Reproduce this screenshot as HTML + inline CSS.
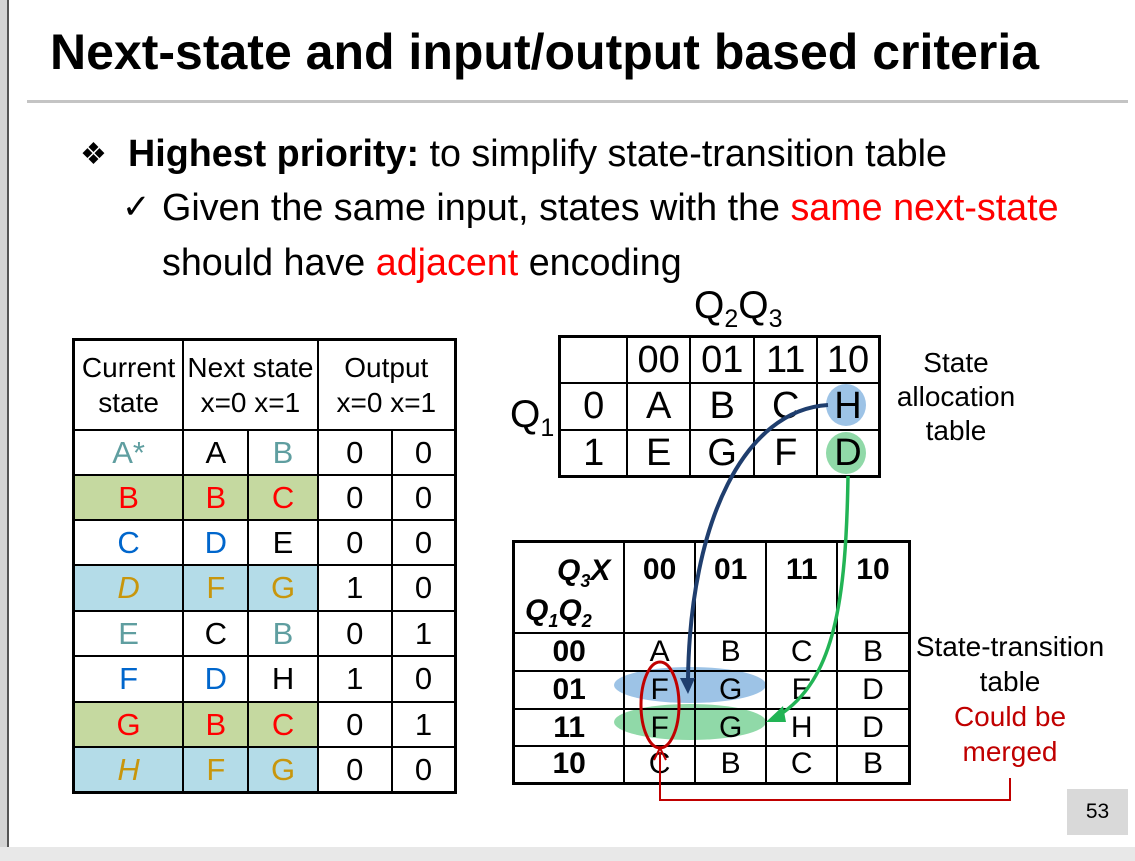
<!DOCTYPE html>
<html><head><meta charset="utf-8"><style>
*{margin:0;padding:0;box-sizing:border-box}
body{width:1135px;height:861px;overflow:hidden;background:#fff;font-family:"Liberation Sans",sans-serif;position:relative;color:#000}
.a{position:absolute;white-space:nowrap}
table{border-collapse:collapse;position:absolute}
td{border:2px solid #000;text-align:center;padding:0;line-height:1}
</style></head><body>
<div class="a" style="left:0;top:0;width:9px;height:861px;background:#d4d4d4;border-right:2px solid #555"></div>
<div class="a" style="left:0;top:847px;width:1135px;height:14px;background:#e8e8e8"></div>
<div class="a" style="left:50px;top:23px;font-size:50px;font-weight:bold">Next-state and input/output based criteria</div>
<div class="a" style="left:27px;top:100px;width:1101px;height:3px;background:#c4c4c4"></div>
<div class="a" style="left:80px;top:137px;font-size:30px">❖</div>
<div class="a" style="left:128px;top:132px;font-size:37.7px"><b>Highest priority:</b> to simplify state-transition table</div>
<div class="a" style="left:122px;top:187px;font-size:34px">✓</div>
<div class="a" style="left:162px;top:186px;font-size:37.7px">Given the same input, states with the <span style="color:#f00">same next-state</span></div>
<div class="a" style="left:162px;top:241px;font-size:37.7px">should have <span style="color:#f00">adjacent</span> encoding</div>

<table style="left:72px;top:338px;width:385px;border:3px solid #000;font-size:31px">
<colgroup><col style="width:110px"><col style="width:66px"><col style="width:70px"><col style="width:75px"><col style="width:64px"></colgroup>
<tr style="height:90px;font-size:28px"><td style="line-height:1.25">Current<br>state</td><td colspan="2" style="line-height:1.25">Next state<br>x=0 x=1</td><td colspan="2" style="line-height:1.25">Output<br>x=0 x=1</td></tr>
<tr style="height:45px"><td style="color:#5f9ea0">A*</td><td>A</td><td style="color:#5f9ea0">B</td><td>0</td><td>0</td></tr>
<tr style="height:45px"><td style="background:#c5d9a0;color:#f00">B</td><td style="background:#c5d9a0;color:#f00">B</td><td style="background:#c5d9a0;color:#f00">C</td><td>0</td><td>0</td></tr>
<tr style="height:45px"><td style="color:#0066cc">C</td><td style="color:#0066cc">D</td><td>E</td><td>0</td><td>0</td></tr>
<tr style="height:46px"><td style="background:#b4dce8;color:#c8960c;font-style:italic">D</td><td style="background:#b4dce8;color:#c8960c">F</td><td style="background:#b4dce8;color:#c8960c">G</td><td>1</td><td>0</td></tr>
<tr style="height:45px"><td style="color:#5f9ea0">E</td><td>C</td><td style="color:#5f9ea0">B</td><td>0</td><td>1</td></tr>
<tr style="height:46px"><td style="color:#0066cc">F</td><td style="color:#0066cc">D</td><td>H</td><td>1</td><td>0</td></tr>
<tr style="height:45px"><td style="background:#c5d9a0;color:#f00">G</td><td style="background:#c5d9a0;color:#f00">B</td><td style="background:#c5d9a0;color:#f00">C</td><td>0</td><td>1</td></tr>
<tr style="height:46px"><td style="background:#b4dce8;color:#c8960c;font-style:italic">H</td><td style="background:#b4dce8;color:#c8960c">F</td><td style="background:#b4dce8;color:#c8960c">G</td><td>0</td><td>0</td></tr>
</table>

<svg class="a" style="left:0;top:0" width="1135" height="861">
<ellipse cx="846" cy="405" rx="20" ry="21" fill="#9dc3e6"/>
<ellipse cx="846" cy="453" rx="20" ry="21" fill="#90d9a8"/>
<ellipse cx="690" cy="685" rx="76" ry="18" fill="#9dc3e6"/>
<ellipse cx="690" cy="722" rx="76" ry="18" fill="#90d9a8"/>
</svg>

<div class="a" style="left:694px;top:284px;font-size:39px">Q<sub style="font-size:25px">2</sub>Q<sub style="font-size:25px">3</sub></div>
<div class="a" style="left:510px;top:393px;font-size:39px">Q<sub style="font-size:25px">1</sub></div>
<table style="left:558px;top:335px;width:323px;border:3px solid #000;font-size:38px">
<colgroup><col style="width:69px"><col style="width:63px"><col style="width:65px"><col style="width:63px"><col style="width:63px"></colgroup>
<tr style="height:46px"><td></td><td>00</td><td>01</td><td>11</td><td>10</td></tr>
<tr style="height:47px"><td>0</td><td>A</td><td>B</td><td>C</td><td>H</td></tr>
<tr style="height:47px"><td>1</td><td>E</td><td>G</td><td>F</td><td>D</td></tr>
</table>

<table style="left:512px;top:540px;width:399px;border:3px solid #000;font-size:30px">
<colgroup><col style="width:111px"><col style="width:71px"><col style="width:72px"><col style="width:71px"><col style="width:73px"></colgroup>
<tr style="height:88px"><td style="font-weight:bold;font-style:italic;text-align:left;vertical-align:top;padding:10px 0 0 10px;line-height:1.2"><span style="padding-left:32px">Q<sub style="font-size:18px">3</sub>X</span><br>Q<sub style="font-size:18px">1</sub>Q<sub style="font-size:18px">2</sub></td><td style="font-weight:bold;vertical-align:top;padding-top:12px">00</td><td style="font-weight:bold;vertical-align:top;padding-top:12px">01</td><td style="font-weight:bold;vertical-align:top;padding-top:12px">11</td><td style="font-weight:bold;vertical-align:top;padding-top:12px">10</td></tr>
<tr style="height:38px"><td style="font-weight:bold">00</td><td>A</td><td>B</td><td>C</td><td>B</td></tr>
<tr style="height:38px"><td style="font-weight:bold">01</td><td>F</td><td>G</td><td>E</td><td>D</td></tr>
<tr style="height:37px"><td style="font-weight:bold">11</td><td>F</td><td>G</td><td>H</td><td>D</td></tr>
<tr style="height:37px"><td style="font-weight:bold">10</td><td>C</td><td>B</td><td>C</td><td>B</td></tr>
</table>

<svg class="a" style="left:0;top:0" width="1135" height="861">
<path d="M828,405 C745,410 690,520 688,680" fill="none" stroke="#1f3e6e" stroke-width="4"/>
<path d="M680,678 L688,694 L695,678 z" fill="#1f3e6e"/>
<path d="M848,476 C846,600 835,680 778,716" fill="none" stroke="#22b455" stroke-width="3.5"/>
<path d="M766,722 L783,706 L786,722 z" fill="#22b455"/>
<ellipse cx="660" cy="705" rx="19" ry="43" fill="none" stroke="#c00000" stroke-width="3"/>
<path d="M1010,778 L1010,800 L660,800 L660,752" fill="none" stroke="#c00000" stroke-width="2"/>
<path d="M654,760 L660,748 L666,760" fill="none" stroke="#c00000" stroke-width="2"/>
</svg>

<div class="a" style="left:875px;top:346px;width:162px;text-align:center;font-size:28px;line-height:34px">State<br>allocation<br>table</div>
<div class="a" style="left:908px;top:629px;width:204px;text-align:center;font-size:28px;line-height:35px">State-transition<br>table<br><span style="color:#c00000">Could be<br>merged</span></div>
<div class="a" style="left:1067px;top:789px;width:61px;height:46px;background:#d9d9d9;font-size:21px;text-align:center;line-height:46px">53</div>
</body></html>
